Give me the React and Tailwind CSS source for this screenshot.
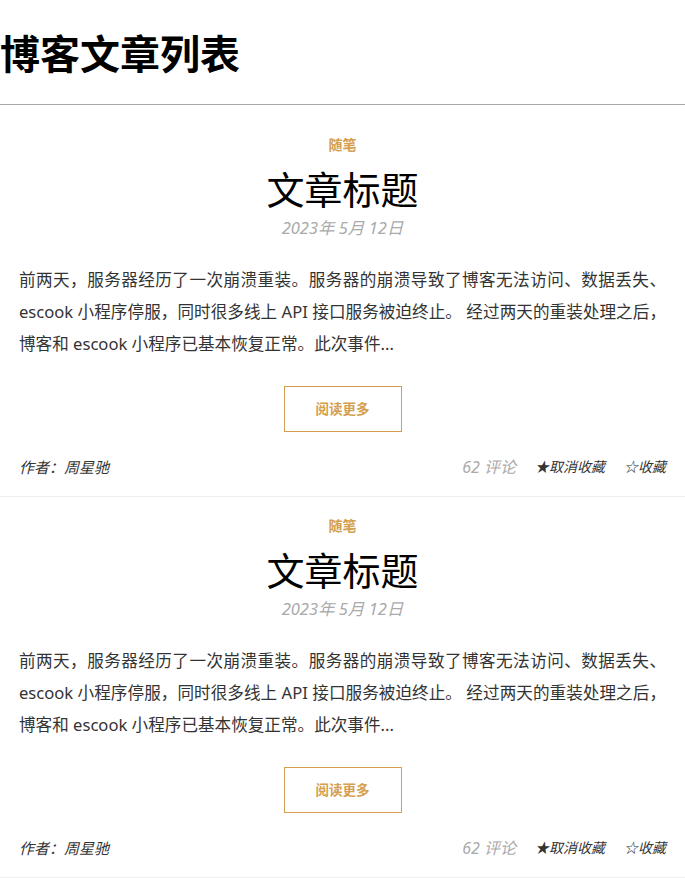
import React from "react";

const font = { fontFamily: '"Noto Sans", "Noto Sans CJK SC", sans-serif' };

function Card() {
  return (
    <div className="border-b border-[#eeeeee] pt-[19px] pb-[19px] flex flex-col items-center">
      <div className="text-[14px] leading-[20px] font-bold text-[#d4a04f]">随笔</div>
      <div className="mt-[12px] text-[38px] leading-[44px] text-black">文章标题</div>
      <div className="mt-[6px] text-[16.5px] leading-[22px] italic text-[#aaaaaa]">2023年 5月 12日</div>
      <p className="mt-[25px] self-stretch px-[19px] text-[16.6px] leading-[32px] text-[#333333] text-justify">
        前两天，服务器经历了一次崩溃重装。服务器的崩溃导致了博客无法访问、数据丢失、escook 小程序停服，同时很多线上 API 接口服务被迫终止。 经过两天的重装处理之后，博客和 escook 小程序已基本恢复正常。此次事件...
      </p>
      <button className="mt-[26px] w-[118px] h-[46px] border border-[#d4a04f] text-[13.5px] font-bold text-[#d4a04f] bg-white">
        阅读更多
      </button>
      <div className="mt-[25px] self-stretch px-[19px] flex items-center justify-between text-[14px] leading-[20px] italic">
        <span className="text-[15px] text-[#333333]">作者：周星驰</span>
        <div className="flex items-center gap-[19px]">
          <span className="text-[16px] text-[#aaaaaa]">62 评论</span>
          <span className="text-[#333333]">★取消收藏</span>
          <span className="text-[#333333]">☆收藏</span>
        </div>
      </div>
    </div>
  );
}

export default function App() {
  return (
    <div className="bg-white w-[685px]" style={font}>
      <h1 className="pt-[25px] text-[40px] leading-[58px] font-bold text-black">博客文章列表</h1>
      <div className="mt-[21px] h-px bg-[#a8a8a8]" />
      <div className="mt-[11px]">
        <Card />
        <Card />
      </div>
    </div>
  );
}
